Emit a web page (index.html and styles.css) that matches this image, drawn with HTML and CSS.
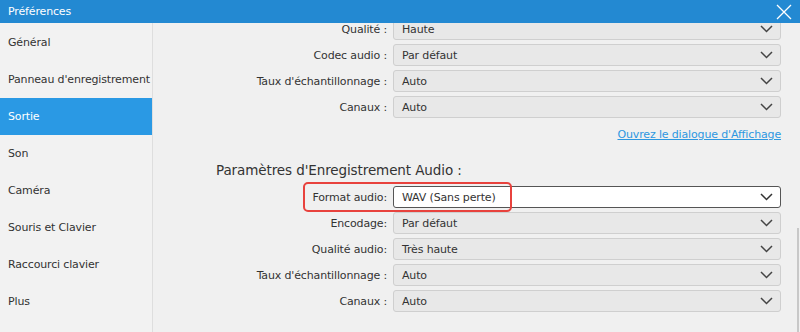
FILE: index.html
```html
<!DOCTYPE html>
<html lang="fr">
<head>
<meta charset="utf-8">
<title>Préférences</title>
<link rel="stylesheet" href="styles.css">
</head>
<body>
<div class="window">
  <header class="titlebar">
    <span class="title">Préférences</span>
    <svg class="close" width="16" height="16" viewBox="0 0 16 16"><path d="M1 1 L15 15 M15 1 L1 15" stroke="#fff" stroke-width="1.3" fill="none"/></svg>
  </header>
  <div class="body">
    <nav class="sidebar">
      <div class="nav-item">Général</div>
      <div class="nav-item">Panneau d'enregistrement</div>
      <div class="nav-item active">Sortie</div>
      <div class="nav-item">Son</div>
      <div class="nav-item">Caméra</div>
      <div class="nav-item">Souris et Clavier</div>
      <div class="nav-item">Raccourci clavier</div>
      <div class="nav-item">Plus</div>
    </nav>
    <main class="main">
      <div class="content">
        <div class="form">
          <div class="row"><label>Qualité :</label><div class="select"><span>Haute</span><svg class="chev" width="13" height="8" viewBox="0 0 13 8"><path d="M1 1 L6.5 6.5 L12 1" stroke="#444" stroke-width="1.5" fill="none"/></svg></div></div>
          <div class="row"><label>Codec audio :</label><div class="select"><span>Par défaut</span><svg class="chev" width="13" height="8" viewBox="0 0 13 8"><path d="M1 1 L6.5 6.5 L12 1" stroke="#444" stroke-width="1.5" fill="none"/></svg></div></div>
          <div class="row"><label>Taux d'échantillonnage :</label><div class="select"><span>Auto</span><svg class="chev" width="13" height="8" viewBox="0 0 13 8"><path d="M1 1 L6.5 6.5 L12 1" stroke="#444" stroke-width="1.5" fill="none"/></svg></div></div>
          <div class="row"><label>Canaux :</label><div class="select"><span>Auto</span><svg class="chev" width="13" height="8" viewBox="0 0 13 8"><path d="M1 1 L6.5 6.5 L12 1" stroke="#444" stroke-width="1.5" fill="none"/></svg></div></div>
        </div>
        <div class="link-row"><a class="link" href="#">Ouvrez le dialogue d'Affichage</a></div>
        <h2 class="section">Paramètres d'Enregistrement Audio :</h2>
        <div class="form">
          <div class="row highlighted"><label>Format audio:</label><div class="select focus"><span>WAV (Sans perte)</span><svg class="chev" width="13" height="8" viewBox="0 0 13 8"><path d="M1 1 L6.5 6.5 L12 1" stroke="#333" stroke-width="1.5" fill="none"/></svg></div><span class="redbox"></span></div>
          <div class="row"><label>Encodage:</label><div class="select"><span>Par défaut</span><svg class="chev" width="13" height="8" viewBox="0 0 13 8"><path d="M1 1 L6.5 6.5 L12 1" stroke="#444" stroke-width="1.5" fill="none"/></svg></div></div>
          <div class="row"><label>Qualité audio:</label><div class="select"><span>Très haute</span><svg class="chev" width="13" height="8" viewBox="0 0 13 8"><path d="M1 1 L6.5 6.5 L12 1" stroke="#444" stroke-width="1.5" fill="none"/></svg></div></div>
          <div class="row"><label>Taux d'échantillonnage :</label><div class="select"><span>Auto</span><svg class="chev" width="13" height="8" viewBox="0 0 13 8"><path d="M1 1 L6.5 6.5 L12 1" stroke="#444" stroke-width="1.5" fill="none"/></svg></div></div>
          <div class="row"><label>Canaux :</label><div class="select"><span>Auto</span><svg class="chev" width="13" height="8" viewBox="0 0 13 8"><path d="M1 1 L6.5 6.5 L12 1" stroke="#444" stroke-width="1.5" fill="none"/></svg></div></div>
        </div>
      </div>
      <div class="scrollbar"></div>
    </main>
  </div>
</div>
</body>
</html>
```

FILE: styles.css
```css
* { box-sizing: border-box; }
html, body { margin: 0; padding: 0; }
body {
  width: 800px;
  height: 332px;
  overflow: hidden;
  font-family: "DejaVu Sans", Verdana, sans-serif;
  font-size: 11px;
  letter-spacing: -0.15px;
  color: #333;
  background: #f0f0f0;
}
.window {
  display: flex;
  flex-direction: column;
  height: 332px;
}
.titlebar {
  height: 23px;
  flex: none;
  background: #2389d2;
  color: #fff;
  display: flex;
  align-items: center;
  justify-content: space-between;
  padding: 0 8px 0 8px;
  position: relative;
  z-index: 2;
}
.title { font-size: 11px; }
.body {
  flex: 1;
  display: flex;
  min-height: 0;
}
.sidebar {
  width: 153px;
  flex: none;
  background: #f2f2f2;
  border-right: 1px solid #dedede;
  padding-top: 1px;
}
.nav-item {
  height: 37px;
  display: flex;
  align-items: center;
  padding-left: 8px;
  font-size: 11px;
  white-space: nowrap;
  color: #333;
}
.nav-item.active {
  background: #2a99e4;
  color: #fff;
}
.main {
  flex: 1;
  position: relative;
  overflow: hidden;
  background: #f0f0f0;
}
.content {
  margin-top: -5px;
  padding-right: 19px;
}
.form {
  display: flex;
  flex-direction: column;
  gap: 4px;
}
.row {
  display: grid;
  grid-template-columns: 1fr 388px;
  column-gap: 6px;
  align-items: center;
  height: 22px;
  position: relative;
}
.row label {
  text-align: right;
  font-size: 11px;
  color: #333;
  white-space: nowrap;
}
.select {
  height: 22px;
  background: #e8e8e8;
  border: 1px solid #cfcfcf;
  border-radius: 3px;
  display: flex;
  align-items: center;
  justify-content: space-between;
  padding: 0 7px 0 8px;
  font-size: 11px;
  color: #333;
}
.select.focus {
  background: #fff;
  border-color: #555;
}
.redbox {
  position: absolute;
  left: 150px;
  top: -4px;
  width: 209px;
  height: 30px;
  border: 2.5px solid #e8423d;
  border-radius: 5px;
  pointer-events: none;
}
.link-row {
  display: flex;
  justify-content: flex-end;
  margin-top: 8px;
  height: 16px;
  align-items: center;
}
.link {
  color: #2d97e0;
  text-decoration: underline;
  font-size: 11px;
}
.section {
  margin: 18px 0 0 63px;
  height: 20px;
  font-size: 13.5px;
  letter-spacing: -0.1px;
  font-weight: normal;
  color: #333;
  line-height: 20px;
}
.section + .form { margin-top: 6px; }
.scrollbar {
  position: absolute;
  right: 1px;
  top: 205px;
  bottom: 0;
  width: 2px;
  background: #c8c8c8;
}
```
